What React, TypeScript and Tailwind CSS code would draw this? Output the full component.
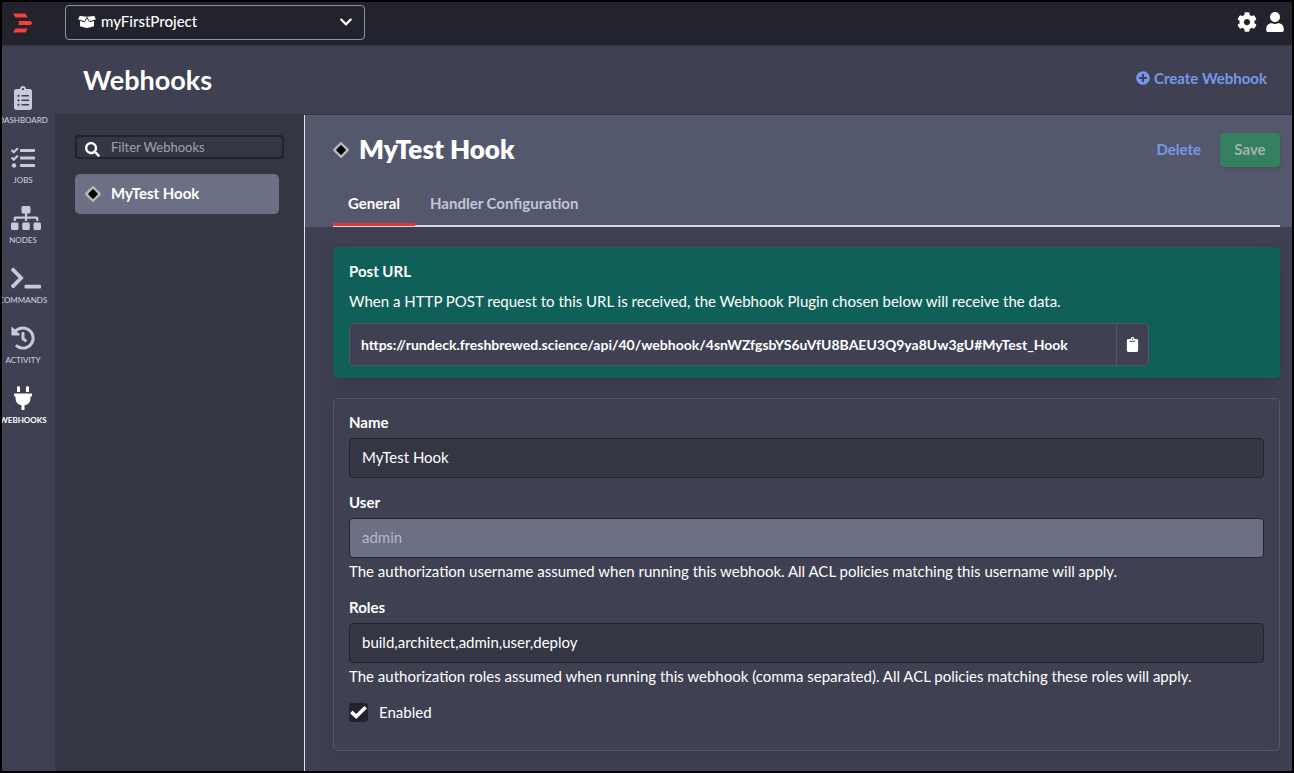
import { useState } from "react";
import type { ReactNode } from "react";
import {
  FaBoxOpen,
  FaChevronDown,
  FaClipboard,
  FaClipboardList,
  FaCog,
  FaHistory,
  FaPlug,
  FaPlusCircle,
  FaSearch,
  FaSitemap,
  FaTasks,
  FaTerminal,
  FaUser,
} from "react-icons/fa";

const navItems = [
  { label: "DASHBOARD", icon: <FaClipboardList className="h-6 w-6 shrink-0" /> },
  { label: "JOBS", icon: <FaTasks className="h-6 w-6 shrink-0" /> },
  { label: "NODES", icon: <FaSitemap className="h-6 w-[30px] shrink-0" /> },
  { label: "COMMANDS", icon: <FaTerminal className="h-6 w-[30px] shrink-0" /> },
  { label: "ACTIVITY", icon: <FaHistory className="h-6 w-6 shrink-0" /> },
  { label: "WEBHOOKS", icon: <FaPlug className="h-6 w-6 shrink-0" />, active: true },
];

function Logo() {
  return (
    <svg viewBox="0 0 20 20" className="h-5 w-5" fill="#f73f39" aria-hidden="true">
      <path d="M0 0.5h12.5l2.2 4H2.6z" />
      <path d="M5 8h12.6l1.9 2-1.9 2H5l1.2-2z" />
      <path d="M2.6 15.5h12.1l-2.2 4H0z" />
    </svg>
  );
}

function DiamondIcon() {
  return (
    <svg viewBox="0 0 16 16" className="h-4 w-4 shrink-0" aria-hidden="true">
      <rect x="2" y="2" width="12" height="12" rx="1.6" fill="#b9b9b9" transform="rotate(45 8 8)" />
      <rect x="4.4" y="4.4" width="7.2" height="7.2" rx="1" fill="#000" transform="rotate(45 8 8)" />
    </svg>
  );
}

function TopBar() {
  return (
    <header className="flex h-11 items-center border-b border-[#333644] bg-[#23232e] pb-0.5 pl-[11px] pr-[7px]">
      <a href="#home" aria-label="Home">
        <Logo />
      </a>
      <div className="relative ml-8 w-[300px]">
        <FaBoxOpen className="pointer-events-none absolute left-[13px] top-[10px] h-[14px] w-[18px] text-white" />
        <select
          aria-label="Project"
          className="block h-[35px] w-full appearance-none rounded border border-[#8e93a6] bg-[#23232e] pb-0.5 pl-[35px] text-[15px] font-medium text-white"
        >
          <option>myFirstProject</option>
        </select>
        <FaChevronDown className="pointer-events-none absolute right-3 top-[10px] h-[14px] w-[14px] text-white" />
      </div>
      <div className="ml-auto flex items-center gap-2 pb-0.5 text-white">
        <button type="button" aria-label="Settings">
          <FaCog className="h-5 w-5" />
        </button>
        <button type="button" aria-label="Account">
          <FaUser className="h-5 w-5" />
        </button>
      </div>
    </header>
  );
}

function SideNav() {
  return (
    <nav className="w-[53px] shrink-0 overflow-hidden bg-[#3f4153] pt-10">
      <ul className="flex w-[42px] flex-col gap-5">
        {navItems.map((item) => (
          <li key={item.label}>
            <a
              href={"#" + item.label.toLowerCase()}
              className={
                "flex flex-col items-center gap-1 whitespace-nowrap text-[8px] leading-3 " +
                (item.active ? "font-bold text-white" : "font-medium text-[#c8cad9]")
              }
            >
              <span className="flex w-6">{item.icon}</span>
              <span>{item.label}</span>
            </a>
          </li>
        ))}
      </ul>
    </nav>
  );
}

function HookList() {
  return (
    <aside className="w-[250px] shrink-0 border-r border-[#e5e6ec] bg-[#343644] pl-5 pr-5 pt-5">
      <label className="flex h-6 items-center rounded-sm border-2 border-[#23232e] pl-2">
        <FaSearch className="mt-1 h-[15px] w-[15px] shrink-0 text-white" />
        <input
          type="search"
          aria-label="Filter Webhooks"
          placeholder="Filter Webhooks"
          className="ml-[11px] w-full bg-transparent text-[13px] leading-5 text-white outline-none placeholder:text-[#a1a2a9]"
        />
      </label>
      <a
        href="#mytest-hook"
        className="mr-[5px] mt-[15px] flex h-10 items-center gap-[10px] rounded-[5px] bg-[#6b7084] pl-[10px] text-[15px] font-bold text-white"
      >
        <DiamondIcon />
        <span className="pb-0.5">MyTest Hook</span>
      </a>
    </aside>
  );
}

function PostUrlCard() {
  return (
    <section className="rounded-[5px] bg-[#10605a] px-4 pb-3 pt-[14px] shadow-[0_6px_16px_rgba(50,45,60,0.45)]">
      <h3 className="text-[15px] font-bold leading-5">Post URL</h3>
      <p className="mt-[10px] text-[15px] leading-5">
        When a HTTP POST request to this URL is received, the Webhook Plugin chosen below will receive the data.
      </p>
      <div className="mt-3 flex h-[43px] w-[800px] max-w-full rounded-[5px] border border-[#53576c] bg-[#3f4153]">
        <span className="flex min-w-0 flex-1 items-center overflow-hidden pl-[11px] text-[14px] font-bold">
          https://rundeck.freshbrewed.science/api/40/webhook/4snWZfgsbYS6uVfU8BAEU3Q9ya8Uw3gU#MyTest_Hook
        </span>
        <button
          type="button"
          aria-label="Copy URL"
          className="flex w-8 items-center justify-center border-l border-[#53576c]"
        >
          <FaClipboard className="h-[15px] w-[15px]" />
        </button>
      </div>
    </section>
  );
}

function Field({
  id,
  label,
  value,
  disabled,
  help,
}: {
  id: string;
  label: string;
  value: string;
  disabled?: boolean;
  help?: ReactNode;
}) {
  return (
    <div>
      <label htmlFor={id} className="block text-[15px] font-bold leading-5">
        {label}
      </label>
      <input
        id={id}
        type="text"
        defaultValue={value}
        disabled={disabled}
        className="mt-1.5 block h-10 w-full rounded-[4px] border border-[#23232e] bg-[#343644] px-3 pb-0.5 text-[15px] text-white disabled:bg-[#6b7084] disabled:text-[#b5b8c6]"
      />
      {help && <p className="mt-px text-[15px] leading-6">{help}</p>}
    </div>
  );
}

function HookForm() {
  const [enabled, setEnabled] = useState(true);
  return (
    <form className="mt-5 flex flex-col gap-[14px] rounded-[5px] border border-[#53576c] px-[15px] pb-7 pt-[13px] shadow-[0_6px_16px_rgba(50,45,60,0.35)]">
      <Field id="hook-name" label="Name" value="MyTest Hook" />
      <Field
        id="hook-user"
        label="User"
        value="admin"
        disabled
        help="The authorization username assumed when running this webhook. All ACL policies matching this username will apply."
      />
      <Field
        id="hook-roles"
        label="Roles"
        value="build,architect,admin,user,deploy"
        help="The authorization roles assumed when running this webhook (comma separated). All ACL policies matching these roles will apply."
      />
      <label className="flex items-center gap-[11px] text-[15px] leading-5">
        <span className="relative flex h-[19px] w-[19px]">
          <input
            type="checkbox"
            checked={enabled}
            onChange={(e) => setEnabled(e.target.checked)}
            className="h-[19px] w-[19px] appearance-none rounded-[3px] bg-[#23232e]"
          />
          {enabled && (
            <svg
              viewBox="0 0 19 19"
              className="pointer-events-none absolute inset-0 h-[19px] w-[19px]"
              fill="none"
              stroke="#fff"
              strokeWidth="3.6"
              aria-hidden="true"
            >
              <path d="M2.4 8.9l4.8 4.6L16.6 4.2" />
            </svg>
          )}
        </span>
        Enabled
      </label>
    </form>
  );
}

function HookDetail() {
  return (
    <main className="flex min-w-0 flex-1 flex-col bg-[#3f4153] text-white">
      <div className="bg-[#54586d] pl-7 pr-3 pt-[18px]">
        <div className="flex items-center">
          <DiamondIcon />
          <h2 className="ml-[10px] pb-0.5 text-[26px] font-extrabold leading-8">MyTest Hook</h2>
          <button type="button" className="ml-auto pb-0.5 text-[15px] font-bold text-[#7797ea]">
            Delete
          </button>
          <button
            type="button"
            className="ml-[19px] h-[34px] w-[60px] rounded-[4px] bg-[#35805f] pb-0.5 text-[15px] font-bold text-[#a3b3b0] shadow-sm"
          >
            Save
          </button>
        </div>
        <div role="tablist" className="mt-4 flex h-[44px] border-b-2 border-[#d5d7e3] text-[15px] font-bold">
          <button
            type="button"
            role="tab"
            aria-selected="true"
            className="-mb-px h-[43px] w-[82px] border-b-3 border-[#e03636]"
          >
            General
          </button>
          <button type="button" role="tab" aria-selected="false" className="ml-[15px] pb-0.5 text-[#c3c6d8]">
            Handler Configuration
          </button>
        </div>
      </div>
      <div className="flex-1 pb-4 pl-7 pr-3 pt-5">
        <PostUrlCard />
        <HookForm />
      </div>
    </main>
  );
}

export default function App() {
  return (
    <div className="flex min-h-screen flex-col border-2 border-black bg-[#3f4153] font-['Lato','Open_Sans',sans-serif]">
      <TopBar />
      <div className="flex flex-1">
        <SideNav />
        <div className="flex min-w-0 flex-1 flex-col">
          <div className="flex h-[69px] items-center justify-between border-b border-[#343644] pl-7 pr-[25px]">
            <h1 className="text-[27px] font-bold text-white">Webhooks</h1>
            <a href="#create" className="flex items-center gap-1 pb-1 text-[15px] font-bold text-[#7797ea]">
              <FaPlusCircle className="h-[14px] w-[14px]" />
              Create Webhook
            </a>
          </div>
          <div className="flex flex-1">
            <HookList />
            <HookDetail />
          </div>
        </div>
      </div>
    </div>
  );
}
